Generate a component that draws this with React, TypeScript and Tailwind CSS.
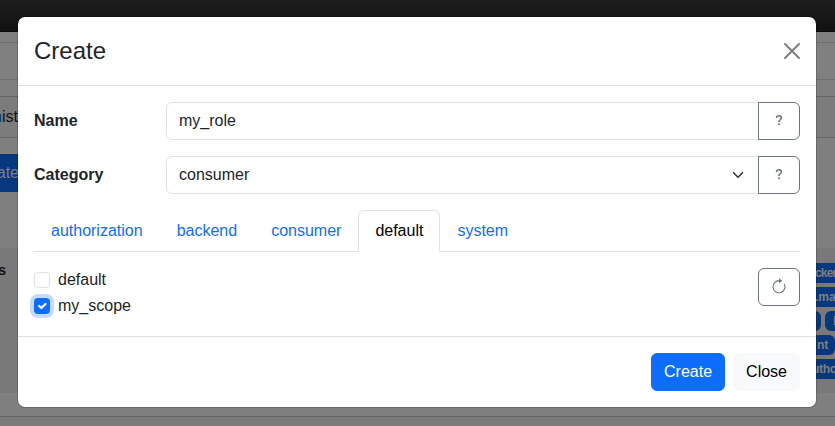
import React from "react";

const tabs = ["authorization", "backend", "consumer", "default", "system"];

function Badge({ children, className = "" }: { children?: React.ReactNode; className?: string }) {
  return (
    <span className={`flex h-5 shrink-0 items-center bg-[#06377f] text-[12px] font-bold leading-none text-[#808080] ${className}`}>
      {children}
    </span>
  );
}

function Backdrop() {
  return (
    <div className="flex h-[426px] w-full flex-col overflow-hidden bg-[#7f7f7f] text-[#101214]">
      <div className="h-8 shrink-0 border-b border-[#080808] bg-gradient-to-b from-[#1e1e1e] to-[#111111]" />
      <div className="h-[11px] shrink-0 border-b border-[#6f6f6f]" />
      <div className="h-[37px] shrink-0 border-b border-[#6f6f6f] bg-[#808080]" />
      <div className="h-[17px] shrink-0 border-b border-[#646464]" />
      <div className="flex h-[41px] shrink-0 items-center border-b border-[#646464] bg-[#7c7c7c]">
        <span className="flex w-[18px] justify-end whitespace-nowrap">
          <span className="text-[#06377f]">n</span>ist
        </span>
      </div>
      <div className="flex h-[110px] shrink-0 items-start pt-4">
        <span className="flex h-[38px] w-[19px] items-center justify-end bg-[#06377f] text-[#808080]">ate</span>
      </div>
      <div className="flex h-[145px] shrink-0 justify-between bg-[#797979]">
        <span className="flex w-[6px] justify-end pt-[12px] text-[14px] font-bold leading-5">s</span>
        <div className="flex w-[20px] flex-col gap-1 pt-[15px]">
          <Badge className="w-[60px]">
            <span className="tracking-[-0.8px]">cker</span>
          </Badge>
          <Badge className="w-[60px]">.mas</Badge>
          <div className="flex gap-1">
            <Badge className="w-[6px] rounded-r-md" />
            <Badge className="w-10 rounded-l-md pl-2">b</Badge>
          </div>
          <Badge className="w-[20px] rounded-r-md pl-0.5">nt</Badge>
          <Badge className="w-[60px]">
            <span className="-ml-[3px] tracking-[-0.3px]">uthor</span>
          </Badge>
        </div>
      </div>
      <div className="h-6 shrink-0 border-b border-[#646464] bg-[#7f7f7f]" />
      <div className="grow bg-[#7b7b7b]" />
    </div>
  );
}

function HelpButton() {
  return (
    <button type="button" aria-label="Help" className="-ml-px flex h-[38px] w-[42px] items-center justify-center rounded-r-md border border-[#6c757d] text-[#6c757d]">
      <svg viewBox="0 0 16 16" className="size-4 -translate-y-px" fill="none" stroke="currentColor" strokeWidth="1.6">
        <path d="M5.5 6C5.6 4.6 6.6 3.8 8 3.8c1.5 0 2.4.8 2.4 2 0 .9-.5 1.4-1.3 2-.7.5-1.1.9-1.1 1.7v.5" />
        <circle cx="8" cy="12.2" r="1" fill="currentColor" stroke="none" />
      </svg>
    </button>
  );
}

function RefreshIcon() {
  return (
    <svg viewBox="0 0 16 16" className="size-4 -translate-y-px" fill="none" stroke="currentColor" strokeWidth="1.1">
      <path d="M8.5 2.7a6 6 0 1 0 4.8 3.2" />
      <path d="M8 .2v5L11.2 2.7z" fill="currentColor" stroke="none" />
    </svg>
  );
}

function Field({ label, value, select }: { label: string; value: string; select?: boolean }) {
  return (
    <div className="mb-4 flex h-[38px] items-center">
      <span className="w-[132px] font-bold">{label}</span>
      <div className="flex h-[38px] grow items-center justify-between rounded-l-md border border-[#dee2e6] px-3">
        <span>{value}</span>
        {select && (
          <svg viewBox="0 0 16 16" className="h-3 w-4" fill="none" stroke="#343a40" strokeWidth="2.2" strokeLinecap="round" strokeLinejoin="round">
            <path d="m2 5 6 6 6-6" />
          </svg>
        )}
      </div>
      <HelpButton />
    </div>
  );
}

function Check({ label, checked }: { label: string; checked?: boolean }) {
  return (
    <label className="mb-0.5 flex h-6 items-center gap-2">
      {checked ? (
        <span className="size-4 rounded bg-[#0d6efd] shadow-[0_0_0_4px_rgba(13,110,253,0.25)]">
          <svg viewBox="-1.5 -1.5 23 23" className="size-4" fill="none" stroke="#fff" strokeWidth="3.2" strokeLinecap="round" strokeLinejoin="round">
            <path d="m6 10 3 3 6-6" />
          </svg>
        </span>
      ) : (
        <span className="size-4 rounded border border-[#dee2e6]" />
      )}
      {label}
    </label>
  );
}

export default function App() {
  return (
    <div className="relative h-[426px] w-full overflow-hidden font-['Liberation_Sans',Arial,sans-serif] text-base">
      <Backdrop />
      <div className="absolute left-[17px] top-4 w-[800px] rounded-lg border border-black/[0.175] bg-white bg-clip-padding text-[#212529]">
        <div className="flex items-center justify-between border-b border-[#dee2e6] p-4">
          <h1 className="text-2xl leading-9">Create</h1>
          <button type="button" aria-label="Close" className="opacity-50">
            <svg viewBox="0 0 16 16" className="size-4" fill="#000">
              <path d="M.293.293a1 1 0 0 1 1.414 0L8 6.586 14.293.293a1 1 0 1 1 1.414 1.414L9.414 8l6.293 6.293a1 1 0 0 1-1.414 1.414L8 9.414l-6.293 6.293a1 1 0 0 1-1.414-1.414L6.586 8 .293 1.707a1 1 0 0 1 0-1.414z" />
            </svg>
          </button>
        </div>
        <div className="p-4">
          <Field label="Name" value="my_role" />
          <Field label="Category" value="consumer" select />
          <div className="mb-4 flex h-[42px] border-b border-[#dee2e6]">
            {tabs.map((tab) => (
              <span
                key={tab}
                className={
                  tab === "default"
                    ? "-mb-px rounded-t-md border border-b-white border-[#dee2e6] bg-white px-4 py-2 text-black"
                    : "border border-transparent px-4 py-2 text-[#0d6efd]"
                }
              >
                {tab}
              </span>
            ))}
          </div>
          <div className="flex items-start justify-between">
            <div>
              <Check label="default" />
              <Check label="my_scope" checked />
            </div>
            <button type="button" aria-label="Refresh" className="flex h-[38px] w-[42px] items-center justify-center rounded-md border border-[#6c757d] text-[#6c757d]">
              <RefreshIcon />
            </button>
          </div>
        </div>
        <div className="flex justify-end gap-2 border-t border-[#dee2e6] p-4">
          <button type="button" className="h-[38px] rounded-md border border-[#0d6efd] bg-[#0d6efd] px-3 text-white">Create</button>
          <button type="button" className="h-[38px] rounded-md border border-[#f8f9fa] bg-[#f8f9fa] px-3 text-black">Close</button>
        </div>
      </div>
    </div>
  );
}
